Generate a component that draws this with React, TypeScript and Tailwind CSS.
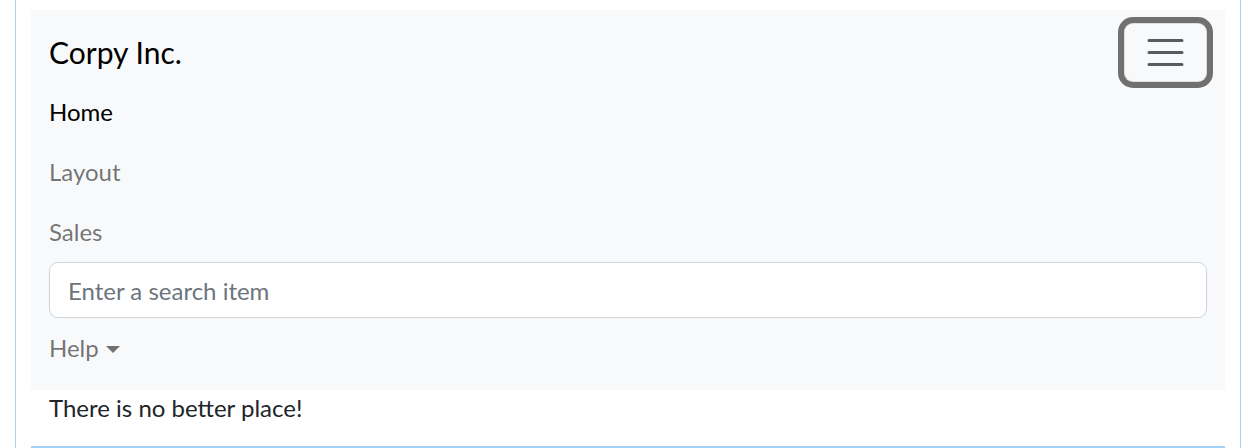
export default function App() {
  const font = { fontFamily: 'Lato, "Noto Sans", sans-serif' };
  return (
    <div className="w-[1256px] h-[448px] bg-white overflow-hidden" style={font}>
      <div className="ml-[15px] w-[1226px] h-[448px] border-x border-[#a3d2f6] px-[15px] pt-[10px]">
        <nav className="bg-[#f8f9fa] py-[12px]">
          <div className="px-[18px]">
            <div className="flex items-center justify-between">
              <a className="block py-[7.5px] text-[30px] leading-[45px] text-black">Corpy Inc.</a>
              <button className="w-[83px] h-[59px] rounded-[9px] border border-black/10 shadow-[0_0_0_6px_rgba(0,0,0,0.55)] flex items-center justify-center">
                <svg width="45" height="45" viewBox="0 0 30 30">
                  <path d="M4 7h22M4 15h22M4 23h22" stroke="rgba(33,37,41,0.75)" strokeWidth="2" strokeLinecap="round" />
                </svg>
              </button>
            </div>
            <ul className="flex flex-col">
              <li className="py-[12px] text-[24px] leading-[36px] text-black">Home</li>
              <li className="py-[12px] text-[24px] leading-[36px] text-black/55">Layout</li>
              <li className="py-[12px] text-[24px] leading-[36px] text-black/55">Sales</li>
              <li>
                <input
                  className="block w-full h-[56px] rounded-[9px] border border-[#ced4da] bg-white px-[18px] py-[9px] text-[24px] leading-[36px] text-[#212529] placeholder:text-[#6c757d] outline-none"
                  placeholder="Enter a search item"
                  style={font}
                />
              </li>
              <li className="py-[12px] text-[24px] leading-[36px] text-black/55 flex items-center">
                Help
                <span className="ml-[7px] mt-[2px] w-0 h-0 border-t-[7px] border-t-[rgba(0,0,0,0.55)] border-x-[7px] border-x-transparent" />
              </li>
            </ul>
          </div>
        </nav>
        <p className="pl-[18px] text-[24px] leading-[36px] text-[#212529]">There is no better place!</p>
        <div className="mt-[20px] border-t-2 border-[#a3d2f6]" />
      </div>
    </div>
  );
}
